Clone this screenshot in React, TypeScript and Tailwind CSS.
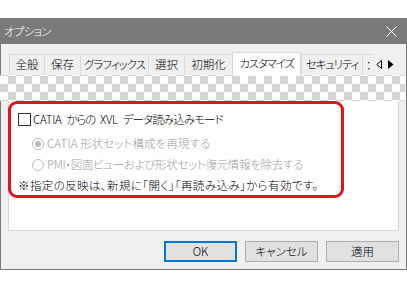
import React from "react";

const font = "font-['Noto_Sans_CJK_JP','Noto_Sans',sans-serif] [font-feature-settings:'palt']";

function Tab({ label, w, active, tr = "" }: { label: string; w: string; active?: boolean; tr?: string }) {
  if (active) {
    return (
      <div
        className={`relative z-10 -mb-[1px] flex h-[24px] ${w} shrink-0 items-center justify-center whitespace-nowrap border-x border-t border-[#d9d9d9] bg-white pb-[1px] text-[11.5px] font-light text-black ${tr}`}
      >
        {label}
      </div>
    );
  }
  return (
    <div
      className={`flex h-[21px] ${w} shrink-0 items-center justify-center overflow-hidden whitespace-nowrap border-l border-t border-[#d9d9d9] bg-[#f0f0f0] text-[11.5px] font-light text-black ${tr}`}
    >
      {label}
    </div>
  );
}

function Btn({ label, def }: { label: string; def?: boolean }) {
  return (
    <div
      className={`flex h-[21px] w-[73px] items-center justify-center bg-[#e1e1e1] text-[11.5px] font-light text-black ${
        def ? "border-2 border-[#0078d7]" : "border border-[#adadad]"
      }`}
    >
      {label}
    </div>
  );
}

export default function App() {
  return (
    <div className={`relative h-[292px] w-[407px] overflow-hidden bg-white pt-[18px] ${font}`}>
      <div className="flex h-[252px] w-[407px] flex-col border border-[#7a7a7a] bg-[#f0f0f0]">
        {/* title bar */}
        <div className="flex h-[25px] shrink-0 items-center justify-between bg-[#7a7a7a] pl-[3px] pr-[9px]">
          <span className="text-[11.5px] font-light tracking-[-0.8px] text-white">オプション</span>
          <svg width="11" height="11" viewBox="0 0 11 11">
            <path d="M0.5 0.5 L10.5 10.5 M10.5 0.5 L0.5 10.5" stroke="#fff" strokeWidth="1" />
          </svg>
        </div>

        {/* tabs */}
        <div className="mt-[8px] flex h-[23px] items-end pl-[8px]">
          <Tab label="全般" w="w-[35px]" />
          <Tab label="保存" w="w-[36px]" />
          <Tab label="グラフィックス" w="w-[68px]" tr="tracking-[-1px]" />
          <Tab label="選択" w="w-[36px]" />
          <Tab label="初期化" w="w-[48px]" />
          <Tab label="カスタマイズ" w="w-[69px]" active tr="tracking-[-1.2px]" />
          <Tab label="セキュリティ" w="w-[61px]" tr="tracking-[-1.2px]" />
          <div className="flex h-[21px] w-[11px] shrink-0 items-center overflow-hidden border-l border-t border-[#d9d9d9] bg-[#f0f0f0] pl-[3px] text-[11px] font-light">
            ：
          </div>
          <div className="flex h-[21px] items-center gap-[6px] self-start pl-[3px] pt-[4px]">
            <svg width="6" height="9" viewBox="0 0 6 9">
              <path d="M5.5 0.5 L0.8 4.5 L5.5 8.5 Z" fill="none" stroke="#000" strokeWidth="1" />
            </svg>
            <svg width="6" height="9" viewBox="0 0 6 9">
              <path d="M0 0 L5.5 4.5 L0 9 Z" fill="#000" />
            </svg>
          </div>
        </div>

        {/* panel */}
        <div className="ml-[7px] h-[156px] w-[391px] border border-[#d9d9d9] bg-white pt-[25px]">
          <div className="-ml-[1px] h-[97px] w-[336px] rounded-[9px] border-[3px] border-[#e5121b] pl-[7px] pt-[6px]">
            <div className="flex h-[19px] items-center">
              <div className="h-[13px] w-[13px] border border-[#333] bg-white" />
              <span className="ml-[2px] flex items-center gap-[5px] text-[11.5px] font-light text-black">
                <span className="tracking-[-0.3px]">CATIA</span>
                <span className="tracking-[-1.2px]">からの</span>
                <span className="tracking-[-0.3px]">XVL</span>
                <span className="tracking-[-0.9px]">データ読み込みモード</span>
              </span>
            </div>
            <div className="mt-[5px] flex h-[19px] items-center pl-[14px]">
              <div className="flex h-[12px] w-[12px] items-center justify-center rounded-full border border-[#bcbcbc] bg-white">
                <div className="h-[6px] w-[6px] rounded-full bg-[#bcbcbc]" />
              </div>
              <span className="ml-[3px] text-[11.5px] font-light tracking-[0.1px] text-[#a0a0a0]">
                CATIA 形状セット構成を再現する
              </span>
            </div>
            <div className="mt-[2px] flex h-[19px] items-center pl-[14px]">
              <div className="h-[12px] w-[12px] rounded-full border border-[#bcbcbc] bg-white" />
              <span className="ml-[3px] text-[11.5px] font-light tracking-[-0.3px] text-[#a0a0a0]">
                PMI・図面ビューおよび形状セット復元情報を除去する
              </span>
            </div>
            <div className="mt-[2px] flex h-[19px] items-center">
              <span className="text-[11.5px] font-light tracking-[0.4px] text-black">
                ※指定の反映は、新規に「開く」「再読み込み」から有効です。
              </span>
            </div>
          </div>
        </div>

        {/* buttons */}
        <div className="mt-[10px] flex justify-end gap-[8px] pr-[7px]">
          <Btn label="OK" def />
          <Btn label="キャンセル" />
          <Btn label="適用" />
        </div>
      </div>

      {/* transparency checker overlay */}
      <div className="absolute left-0 top-[75px] h-[26px] w-[405px] bg-[image:conic-gradient(#d4d4d4_25%,#ffffff_0_50%,#d4d4d4_0_75%,#ffffff_0)] bg-[length:16px_16px] bg-[position:0px_1px]" />
    </div>
  );
}
